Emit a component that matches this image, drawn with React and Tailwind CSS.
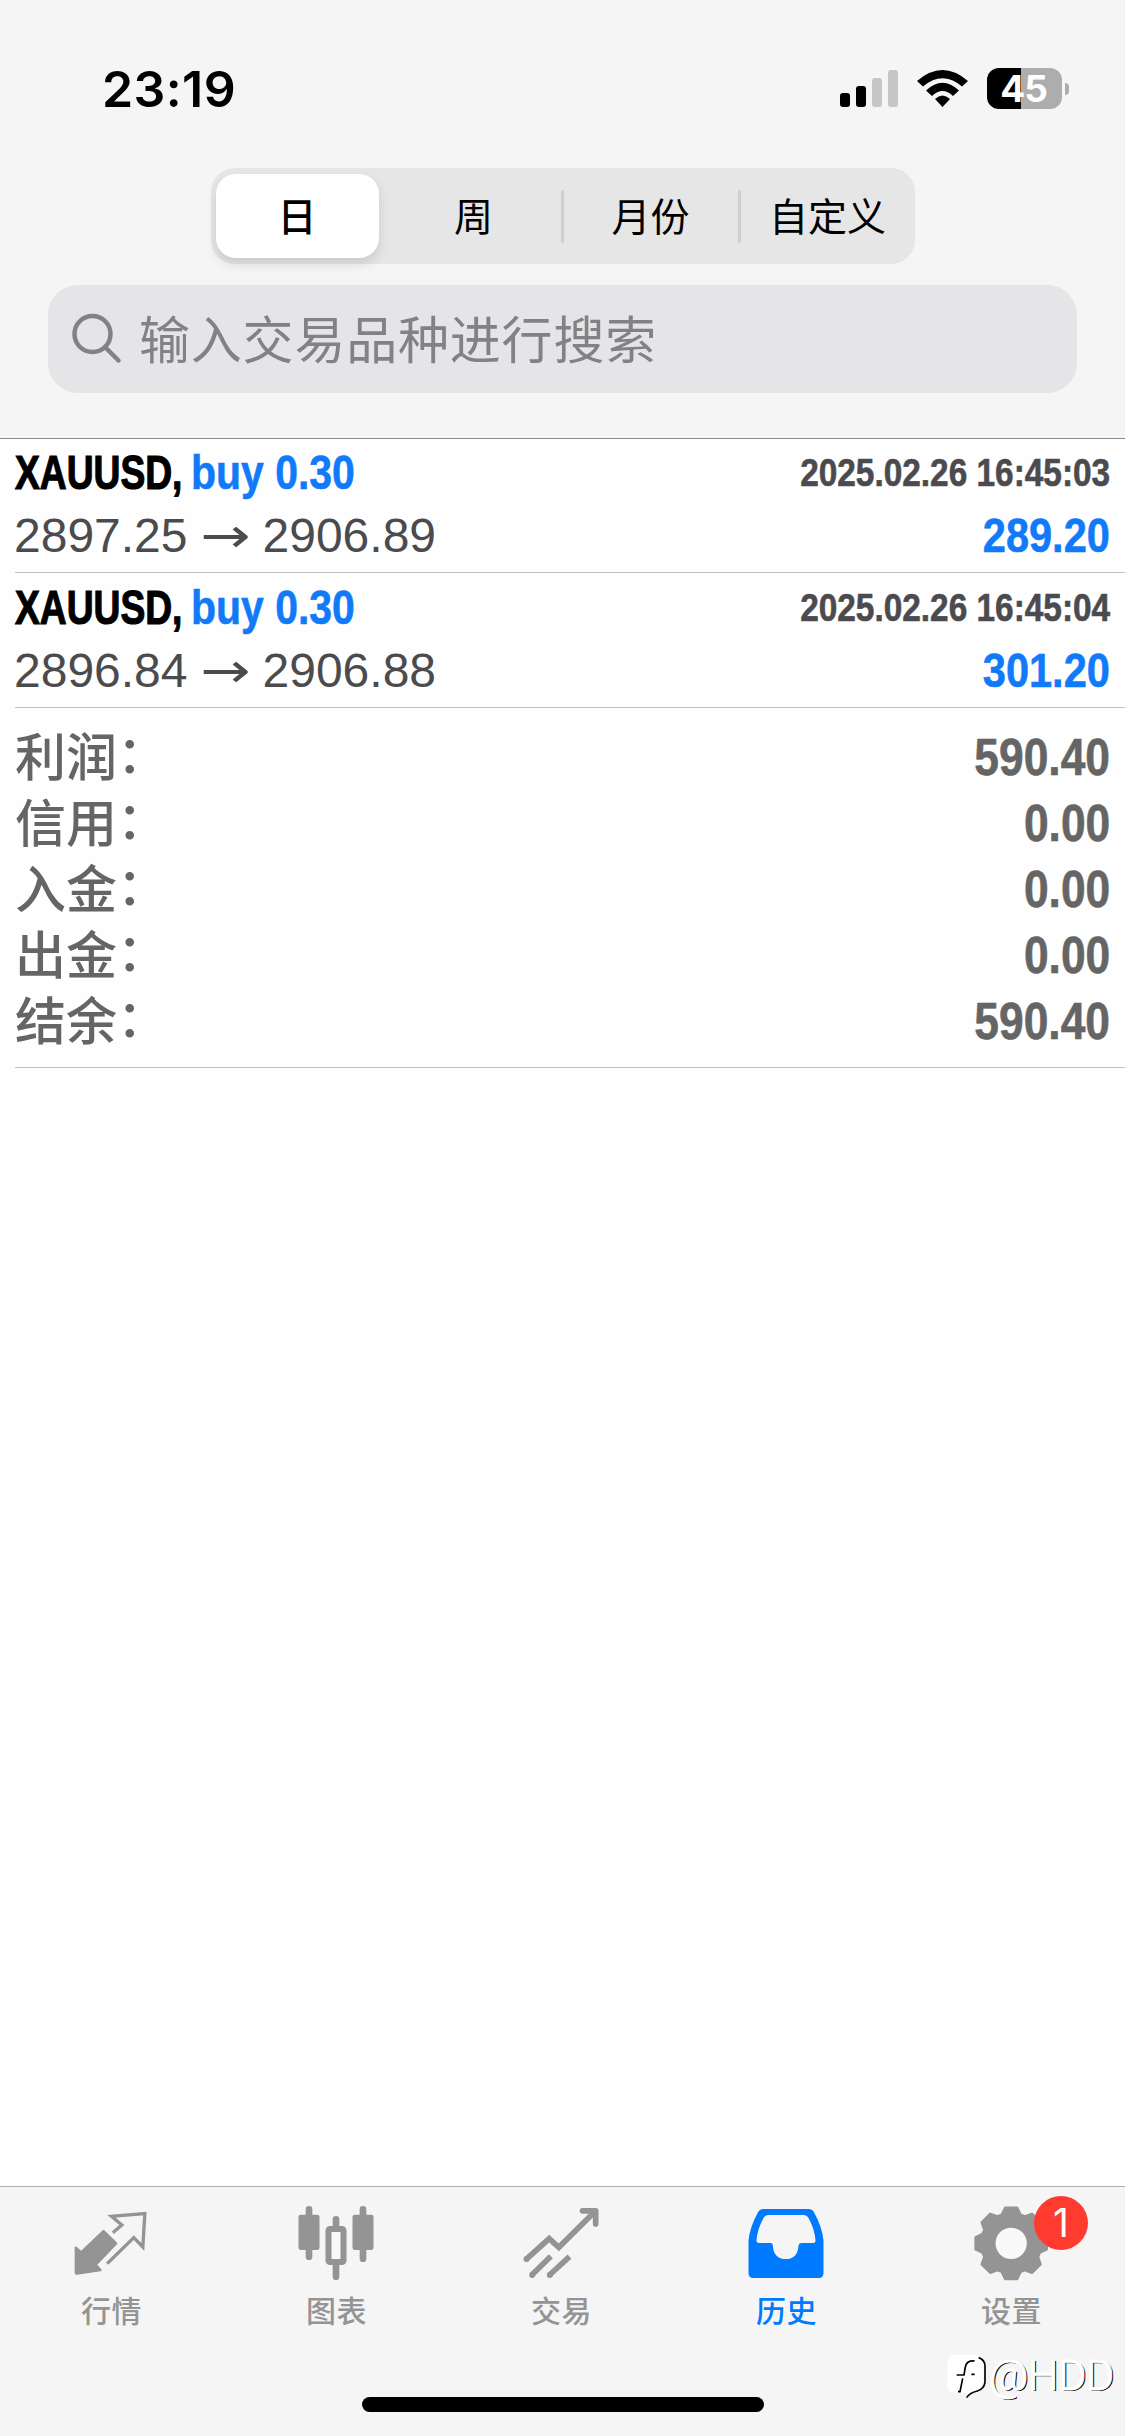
const periods = ['周', '月份', '自定义'];

const deals = [
  { symbol: 'XAUUSD', side: 'buy 0.30', open: '2897.25', close: '2906.89', time: '2025.02.26 16:45:03', profit: '289.20' },
  { symbol: 'XAUUSD', side: 'buy 0.30', open: '2896.84', close: '2906.88', time: '2025.02.26 16:45:04', profit: '301.20' },
];

const totals = [
  { label: '利润', value: '590.40' },
  { label: '信用', value: '0.00' },
  { label: '入金', value: '0.00' },
  { label: '出金', value: '0.00' },
  { label: '结余', value: '590.40' },
];

const gearPath = () => {
  const points = [];
  for (let i = 0; i < 8; i++) {
    [[-18, 90], [-9.5, 108], [9.5, 108], [18, 90]].forEach(([deg, r]) => {
      const a = ((i * 45 + deg) * Math.PI) / 180;
      points.push(`${(635 + r * Math.sin(a)).toFixed(1)} ${(220 - r * Math.cos(a)).toFixed(1)}`);
    });
  }
  return `M${points.join('L')}Z`;
};

const QuotesIcon = () => (
  <svg className="size-20" viewBox="217.5 99 240 240">
    <path
      d="M312 183L350 220L289 284L303 300L232 311Q229 311 229 308V233L245 247Z"
      fill="currentColor" stroke="currentColor" strokeWidth="7" strokeLinejoin="round"
    />
    <path d="M340 188L367 165L336 139L436 131L430 231L403 203L323 281" fill="none" stroke="currentColor" strokeWidth="10" />
  </svg>
);

const ChartIcon = () => (
  <svg className="size-20" viewBox="892.5 99 240 240">
    <g stroke="currentColor" strokeWidth="20" strokeLinecap="round">
      <path d="M928.5 118V260M1009.5 148V170M1009.5 285V320M1090.5 118V266" />
    </g>
    <g fill="currentColor">
      <rect x="897" y="134" width="63" height="106" rx="7" />
      <rect x="1059" y="134" width="63" height="106" rx="7" />
    </g>
    <rect x="987" y="177" width="45" height="99" rx="4" fill="#f9f9f9" stroke="currentColor" strokeWidth="18" />
  </svg>
);

const TradeIcon = () => (
  <svg className="size-20" viewBox="367.5 99 240 240">
    <g fill="none" stroke="currentColor" strokeWidth="17">
      <path d="M380 268L449 206L478 232L584 127" />
      <path d="M549 122.5H588.5V162" strokeLinecap="round" strokeLinejoin="round" />
      <path d="M397 315L454 259M450 315L510 260" />
    </g>
    <g fill="currentColor">
      <circle cx="381" cy="267" r="9" />
      <circle cx="398" cy="315" r="9" />
      <circle cx="451" cy="315" r="9" />
    </g>
  </svg>
);

const HistoryIcon = () => (
  <svg className="size-20" viewBox="1042.5 99 240 240">
    <path
      fill="currentColor" fillRule="evenodd"
      d="M1047 212Q1051 170 1076 126Q1081 117 1092 117H1227Q1238 117 1243 126Q1268 170 1272 212V310Q1272 324 1258 324H1061Q1047 324 1047 310ZM1071 211Q1074 176 1092 144Q1097 135 1107 135H1212Q1222 135 1227 144Q1245 176 1248 211Q1249 219 1241 219H1205Q1198 219 1197 227Q1194 267 1159 267Q1123 267 1120 227Q1120 219 1113 219H1078Q1070 219 1071 211Z"
    />
  </svg>
);

const SettingsIcon = () => (
  <svg className="size-20" viewBox="517.5 99 240 240">
    <path d={gearPath()} fill="currentColor" stroke="currentColor" strokeWidth="8" strokeLinejoin="round" />
    <circle cx="635" cy="220" r="47" fill="#f9f9f9" />
  </svg>
);

const tabs = [
  { label: '行情', Icon: QuotesIcon },
  { label: '图表', Icon: ChartIcon },
  { label: '交易', Icon: TradeIcon },
  { label: '历史', Icon: HistoryIcon, active: true },
  { label: '设置', Icon: SettingsIcon, badge: 1 },
];

const StatusBar = () => (
  <div className="flex h-[168px] items-start justify-between pl-[102px] pr-[56px] pt-[68px]">
    <span className="font-['Inter'] text-[50px] font-semibold leading-[42px] tracking-[0.4px] text-black">23:19</span>
    <div className="flex h-[41px] items-center">
      <svg className="h-[37px] w-[59px]" viewBox="0 0 59 37">
        <rect x="0" y="23" width="10" height="14" rx="3" />
        <rect x="16" y="16" width="10" height="21" rx="3" />
        <rect x="32" y="8" width="10" height="29" rx="3" fill="#c6c6c6" />
        <rect x="48" y="0" width="10" height="37" rx="3" fill="#c6c6c6" />
      </svg>
      <svg className="ml-[18px] h-[37px] w-[51px]" viewBox="0 0 51 37">
        <path d="M0 11Q25.500 -11 51 11L45 16.500Q25.500 0 6 16.500Z" />
        <path d="M9 20.500Q25.500 5 42 20.500L36 26Q25.500 16 15 26Z" />
        <path d="M18 29Q25.500 22 33 29L25.500 37Z" />
      </svg>
      <div className="ml-[19px] flex h-[41px] w-[75px] items-center justify-center rounded-[12px] bg-linear-to-r from-black from-45% to-[#adadad] to-45%">
        <span className="mr-[2px] font-['Inter'] text-[37px] font-bold leading-[41px] tracking-[-1px] text-white">45</span>
      </div>
      <div className="ml-[3px] h-[12px] w-[4px] rounded-r-full bg-[#adadad]" />
    </div>
  </div>
);

const DealRow = ({ deal }) => (
  <div className="ml-[15px] h-[135px] border-b border-[#c0c0c2] pr-[15px] pt-[3px]">
    <div className="flex h-[63px] items-center justify-between font-bold [-webkit-text-stroke:0.6px_currentColor]">
      <div className="flex whitespace-pre text-[48px] leading-[63px]">
        <span className="w-[176px] origin-left scale-x-[0.775] text-black [-webkit-text-stroke:1.2px_currentColor]">{deal.symbol},</span>
        <span className="origin-left scale-x-[0.853] text-[#117af8]">{deal.side}</span>
      </div>
      <span className="origin-right scale-x-[0.856] text-[39px] leading-[61px] text-[#4b4b4f]">{deal.time}</span>
    </div>
    <div className="-ml-px flex h-[63px] items-center justify-between">
      <div className="flex items-center whitespace-pre text-[48px] leading-[63px] text-[#4b4b4d]">
        <span>{deal.open}</span>
        <span className="w-[75px] scale-x-[1.25] text-center font-['DejaVu_Sans']">→</span>
        <span>{deal.close}</span>
      </div>
      <span className="origin-right scale-x-[0.865] text-[48px] font-bold leading-[63px] text-[#117af8] [-webkit-text-stroke:0.6px_currentColor]">
        {deal.profit}
      </span>
    </div>
  </div>
);

const Watermark = () => (
  <div className="absolute right-[11px] top-[165px] flex items-center">
    <svg className="h-[46px] w-[43px]" viewBox="0 0 129 138">
      <path d="M30 6H84Q112 6 112 34V88Q112 108 92 114L56 134L66 120H30Q4 120 4 92V34Q4 6 30 6Z" fill="#fff" />
      <path d="M98 14Q117 20 117 40V88Q114 108 94 114Q70 120 62 134" fill="none" stroke="#000" strokeWidth="5" />
      <path d="M86 24Q62 20 58 42L54 66H32M50 76L42 116H36M76 64H86" fill="none" stroke="#000" strokeWidth="5" />
    </svg>
    <span className="pb-[2px] font-['Roboto'] text-[43px] font-light leading-[46px] tracking-[-0.3px] text-white [text-shadow:1.5px_1px_0_#000] [-webkit-text-stroke:1px_#fff]">
      @HDD
    </span>
  </div>
);

const App = () => {
  return (
    <div className="flex h-[2436px] w-[1125px] flex-col overflow-hidden bg-[#fefefe] font-['Liberation_Sans','Noto_Sans_CJK_SC',sans-serif]">
      {/* Header */}
      <header className="h-[439px] border-b border-[#8c8c8e] bg-[#f5f5f5]">
        <StatusBar />
        <div className="mx-auto flex h-24 w-[704px] items-center rounded-[24px] bg-[#e6e6e6] pl-[5px] font-['Noto_Sans_CJK_SC',sans-serif] text-[39px] text-black">
          <div className="mr-2 flex h-[84px] w-[163px] items-center justify-center rounded-[20px] bg-white pb-1 font-medium shadow-[0_6px_12px_rgba(0,0,0,0.12)]">
            日
          </div>
          {periods.map((p, i) => (
            <div key={p} className="flex items-center">
              {i > 0 && <div className="h-[53px] w-[3px] rounded-full bg-[#cfcfd0]" />}
              <div className="flex h-[84px] w-[174px] items-center justify-center pb-1">{p}</div>
            </div>
          ))}
        </div>
        <div className="mx-12 mt-[21px] flex h-[108px] items-center rounded-[30px] bg-[#e5e5e7] pl-[23px] text-[#828284]">
          <svg className="size-[52px]" viewBox="0 0 52 52" fill="none" stroke="currentColor" strokeWidth="4.5" strokeLinecap="round">
            <circle cx="21.500" cy="21" r="18" />
            <path d="M34 34L47.500 47.500" />
          </svg>
          <span className="ml-4 pb-1 font-['Noto_Sans_CJK_SC',sans-serif] text-[51px] leading-[60px] tracking-[0.8px]">输入交易品种进行搜索</span>
        </div>
      </header>

      {/* Deals */}
      <main className="-mt-px flex-1">
        {deals.map((deal) => (
          <DealRow key={deal.time} deal={deal} />
        ))}
        <div className="ml-[15px] border-b border-[#c0c0c2] pb-[13px] pr-[15px] pt-4 text-[#656565]">
          {totals.map((t) => (
            <div key={t.label} className="flex h-[66px] items-center justify-between">
              <div className="flex pb-[6px] font-['Noto_Sans_CJK_SC',sans-serif] text-[51px] font-medium leading-[60px]">
                {t.label}
                <span className="-mt-[3px]">：</span>
              </div>
              <span className="origin-right scale-x-[0.87] pt-px text-[51px] font-bold leading-[65px] [-webkit-text-stroke:0.6px_currentColor]">{t.value}</span>
            </div>
          ))}
        </div>
      </main>

      {/* Tab bar */}
      <nav className="relative h-[250px] border-t border-[#adadad] bg-[#f5f5f5] pt-4">
        <div className="-ml-px mr-px grid grid-cols-5">
          {tabs.map(({ label, Icon, active, badge }) => (
            <div key={label} className={active ? 'relative flex flex-col items-center text-[#007aff]' : 'relative flex flex-col items-center text-[#949494]'}>
              <Icon />
              <span className="mt-[8px] font-['Noto_Sans_CJK_SC',sans-serif] text-[30px] font-medium leading-[36px] tracking-[0.5px]">{label}</span>
              {badge && (
                <span className="absolute -top-[7px] left-[135px] flex size-[54px] items-center justify-center rounded-full bg-[#ff3b30] font-['Inter'] text-[39px] text-white">
                  {badge}
                </span>
              )}
            </div>
          ))}
        </div>
        <div className="mx-auto mt-[70px] h-[15px] w-[402px] rounded-full bg-black" />
        <Watermark />
      </nav>
    </div>
  );
};

export default App;
